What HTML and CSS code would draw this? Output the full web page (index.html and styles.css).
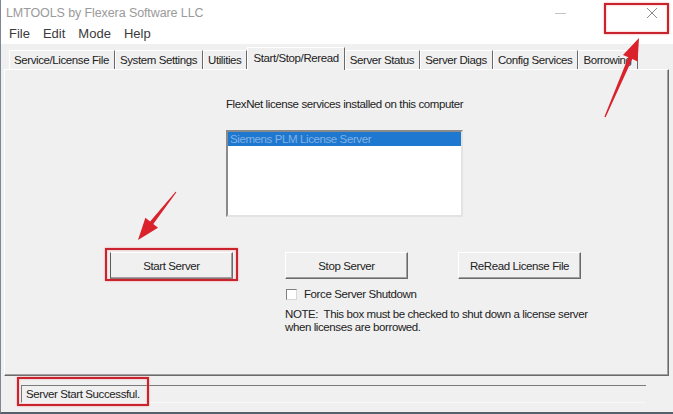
FILE: index.html
```html
<!doctype html>
<html lang="en">

<head>
    <meta charset="UTF-8">
    <title>LMTOOLS</title>
    <link rel="stylesheet" href="styles.css">
</head>

<body>
    <div class="window">
        <div class="titlebar">
            <span class="title">LMTOOLS by Flexera Software LLC</span>
            <span class="minimize"></span>
            <svg class="close" width="12" height="12" viewBox="0 0 12 12">
                <path d="M1 1 L11 11 M11 1 L1 11" stroke="#8a8a8a" stroke-width="1" fill="none" />
            </svg>
        </div>
        <div class="menubar">
            <span class="menu--item">File</span>
            <span class="menu--item">Edit</span>
            <span class="menu--item">Mode</span>
            <span class="menu--item">Help</span>
        </div>
        <div class="tabs">
            <div class="tab">Service/License File</div>
            <div class="tab">System Settings</div>
            <div class="tab">Utilities</div>
            <div class="tab tab--active">Start/Stop/Reread</div>
            <div class="tab">Server Status</div>
            <div class="tab">Server Diags</div>
            <div class="tab">Config Services</div>
            <div class="tab">Borrowing</div>
        </div>
        <div class="panel">
            <p class="panel--label">FlexNet license services installed on this computer</p>
            <div class="listbox">
                <div class="listbox--item selected">Siemens PLM License Server</div>
            </div>
            <div class="actions">
                <button class="btn btn--default">Start Server</button>
                <div class="stop-group">
                    <div class="btn-row">
                        <button class="btn">Stop Server</button>
                        <button class="btn">ReRead License File</button>
                    </div>
                    <label class="check"><span class="check--box"></span>Force Server Shutdown</label>
                    <p class="note">NOTE:&nbsp; This box must be checked to shut down a license server<br>when licenses are borrowed.</p>
                </div>
            </div>
        </div>
        <div class="statusbar">
            <div class="status--field">Server Start Successful.</div>
        </div>

        <div class="mark mark--close"></div>
        <div class="mark mark--start"></div>
        <div class="mark mark--status"></div>
        <svg class="arrows" width="673" height="414" viewBox="0 0 673 414">
            <polygon fill="#d9222c"
                points="605.6,117.2 632.3,59.1 637.6,61.4 639,38 623,55 628.3,57.3 604.4,116.8" />
            <polygon fill="#d9222c"
                points="176.4,192.3 153.3,224 158,227.8 138,240 145.4,217.8 150.1,221.6 175.6,191.7" />
        </svg>
    </div>
</body>

</html>
```

FILE: styles.css
```css
body {
    margin: 0;
    font-family: "Liberation Sans", Arial, sans-serif;
    color: #222222;
}

.window {
    position: relative;
    width: 672px;
    height: 412px;
    background-color: #f0f0f0;
    border-left: 1px solid #7d8894;
    border-bottom: 2px solid #56606b;
    overflow: hidden;
}

.titlebar {
    display: flex;
    align-items: center;
    height: 26px;
    padding-left: 5px;
    background-color: #ffffff;
}

.title {
    font-size: 12.5px;
    letter-spacing: -0.1px;
    color: #9a9a9a;
}

.minimize {
    width: 11px;
    height: 1px;
    margin-left: auto;
    background-color: #c4c4c4;
}

.close {
    margin: 0 15px 0 80px;
}

.menubar {
    display: flex;
    gap: 13px;
    height: 18px;
    padding-left: 8px;
    background-color: #ffffff;
    font-size: 13px;
    color: #3a3a3a;
}

.tabs {
    display: flex;
    align-items: flex-end;
    height: 23px;
    margin-top: 2px;
    padding-left: 8px;
    font-size: 11.5px;
    letter-spacing: -0.4px;
}

.tab {
    height: 18px;
    line-height: 19px;
    padding: 0 5px 0 4px;
    border-top: 1px solid #ffffff;
    border-left: 1px solid #ffffff;
    border-right: 1px solid #6a6a6a;
    white-space: nowrap;
}

.tab--active {
    height: 22px;
    line-height: 20px;
    margin-bottom: -1px;
    padding: 0 5px 0 5px;
    position: relative;
    background-color: #f0f0f0;
}

.panel {
    height: 305px;
    margin: 0 4px 0 3px;
    border-top: 1px solid #ffffff;
    border-left: 1px solid #ffffff;
    border-right: 1px solid #6a6a6a;
    border-bottom: 1px solid #6a6a6a;
    box-shadow: inset -1px -1px #a0a0a0;
    font-size: 11.5px;
    letter-spacing: -0.4px;
}

.panel--label {
    margin: 27px 0 0 221px;
    line-height: 14px;
}

.listbox {
    width: 233px;
    height: 83px;
    margin: 19px 0 0 221px;
    background-color: #ffffff;
    border-top: 2px solid #8a8a8a;
    border-left: 2px solid #8a8a8a;
    border-right: 2px solid #e3e3e3;
    border-bottom: 2px solid #e3e3e3;
}

.listbox--item {
    height: 14px;
    line-height: 14px;
    padding-left: 2px;
}

.listbox--item.selected {
    background-color: #1e78d0;
    color: #82b2e2;
}

.actions {
    display: flex;
    gap: 52px;
    margin: 35px 0 0 105px;
}

.btn {
    width: 123px;
    height: 27px;
    padding: 0;
    font-family: "Liberation Sans", Arial, sans-serif;
    font-size: 11.5px;
    letter-spacing: -0.4px;
    color: #222222;
    background-color: #f0f0f0;
    border: 1px solid;
    border-color: #ffffff #6a6a6a #6a6a6a #ffffff;
    box-shadow: inset -1px -1px #a0a0a0;
}

.btn--default {
    border-left-color: #5a5a5a;
}

.btn-row {
    display: flex;
    gap: 50px;
}

.check {
    display: flex;
    align-items: center;
    gap: 7px;
    margin-top: 9px;
    padding-left: 1px;
    line-height: 13px;
}

.check--box {
    width: 9px;
    height: 9px;
    background-color: #ffffff;
    border-top: 1px solid #808080;
    border-left: 1px solid #808080;
    border-right: 1px solid #d8d8d8;
    border-bottom: 1px solid #d8d8d8;
}

.note {
    margin: 7px 0 0 0;
    line-height: 13px;
}

.statusbar {
    padding: 9px 0 0 20px;
}

.status--field {
    width: 620px;
    height: 16px;
    line-height: 16px;
    padding-left: 4px;
    border-top: 1px solid #7a7a7a;
    border-left: 1px solid #7a7a7a;
    border-bottom: 1px solid #f8f8f8;
    font-size: 11.5px;
    letter-spacing: -0.4px;
}

/* red annotation marks */
.mark {
    position: absolute;
    border: 2px solid #c9232d;
    box-shadow: 0 0 2px #f39aa0, inset 0 0 2px #f39aa0;
}

.mark--close {
    left: 603px;
    top: 3px;
    width: 61px;
    height: 27px;
}

.mark--start {
    left: 104px;
    top: 248px;
    width: 129px;
    height: 29px;
}

.mark--status {
    left: 16px;
    top: 377px;
    width: 128px;
    height: 25px;
}

.arrows {
    position: absolute;
    left: -1px;
    top: 0;
    pointer-events: none;
}
```
